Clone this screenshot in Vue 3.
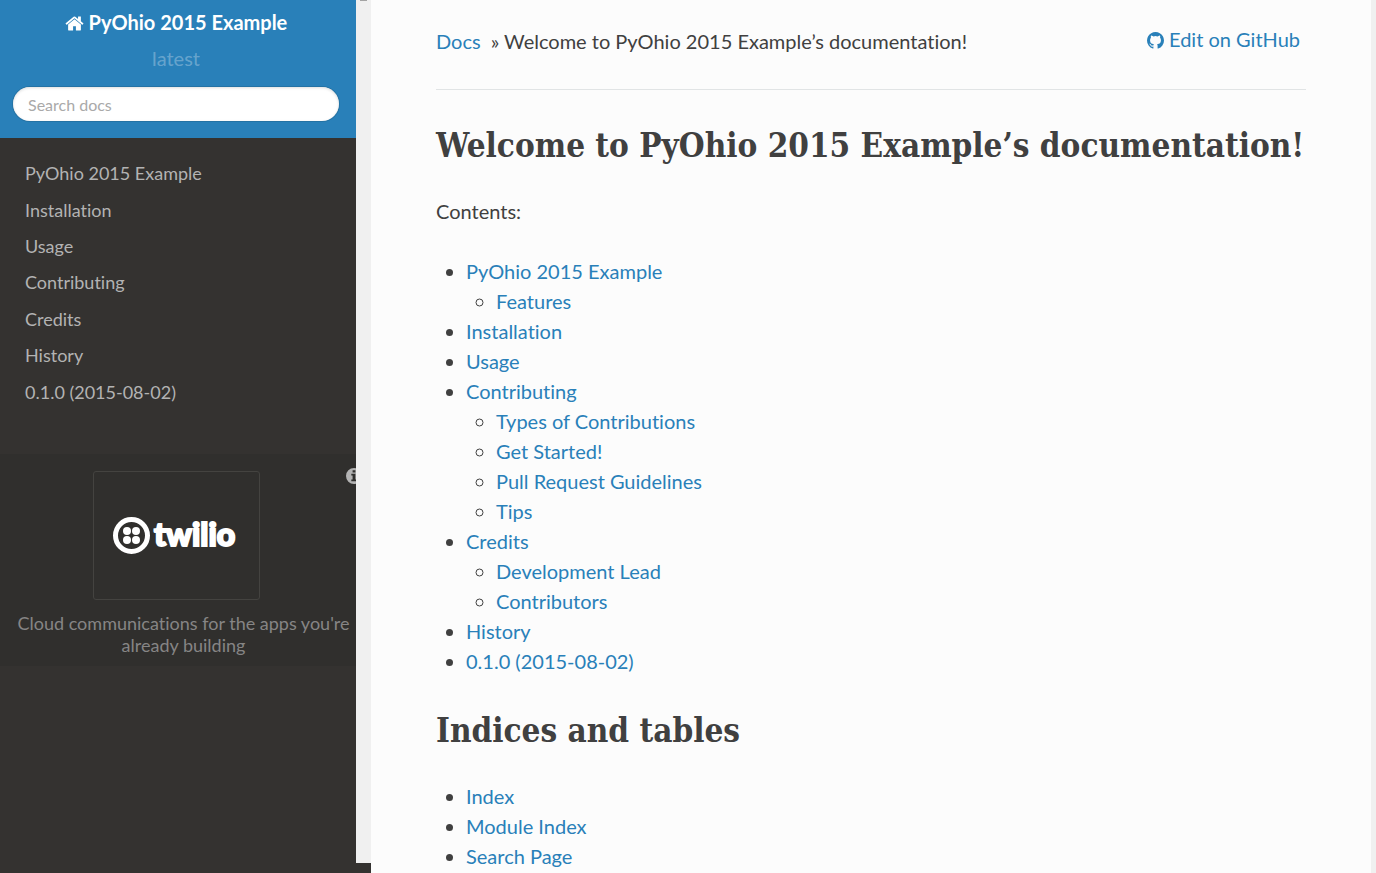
<script setup>
const menu = ['PyOhio 2015 Example', 'Installation', 'Usage', 'Contributing', 'Credits', 'History', '0.1.0 (2015-08-02)']
const contents = [
  { title: 'PyOhio 2015 Example', children: ['Features'] },
  { title: 'Installation' },
  { title: 'Usage' },
  { title: 'Contributing', children: ['Types of Contributions', 'Get Started!', 'Pull Request Guidelines', 'Tips'] },
  { title: 'Credits', children: ['Development Lead', 'Contributors'] },
  { title: 'History' },
  { title: '0.1.0 (2015-08-02)' },
]
const indices = ['Index', 'Module Index', 'Search Page']
</script>

<template>
  <div class="page">
    <aside class="side">
      <div class="side-scroll">
        <div class="side-body">
          <header class="side-head">
            <a class="home" href="#">
              <svg class="home-icon" viewBox="0 0 1664 1536" aria-hidden="true">
                <path d="M1408 864v480q0 26-19 45t-45 19H960v-384H704v384H320q-26 0-45-19t-19-45V864q0-1 .5-3t.5-3l575-474 575 474q1 2 1 6zm223-69l-62 74q-8 9-21 11h-3q-13 0-21-7L832 296 140 873q-12 8-24 7-13-2-21-11l-62-74q-8-10-7-23.500t11-21.500l719-599q32-26 76-26t76 26l244 204V160q0-14 9-23t23-9h192q14 0 23 9t9 23v408l219 182q10 8 11 21.500t-7 23.500z" />
              </svg>
              PyOhio 2015 Example</a>
            <div class="version">latest</div>
            <form role="search" @submit.prevent>
              <input class="search" type="text" placeholder="Search docs" aria-label="Search docs">
            </form>
          </header>
          <nav aria-label="Documentation">
            <ul class="menu">
              <li v-for="item in menu" :key="item"><a href="#">{{ item }}</a></li>
            </ul>
          </nav>
          <section class="promo">
            <a class="promo-info" href="#" aria-label="About this sponsor">
              <svg viewBox="0 0 16 16" aria-hidden="true">
                <path fill-rule="evenodd" d="M8 0a8 8 0 1 1 0 16A8 8 0 0 1 8 0zM6.600 2.300v2.200h2.800V2.300zM5.300 5.800v1.700h1.300v3.900H5.300v1.900h5.400v-1.900H9.400V5.800z" />
              </svg>
            </a>
            <a class="promo-card" href="#" aria-label="twilio">
              <svg viewBox="0 0 128 38" class="logo" aria-hidden="true">
                <circle cx="18.500" cy="18.500" r="16" fill="none" stroke="#fff" stroke-width="5" />
                <circle cx="14" cy="14" r="4" />
                <circle cx="23" cy="14" r="4" />
                <circle cx="14" cy="23" r="4" />
                <circle cx="23" cy="23" r="4" />
                <text x="41" y="29">twilio</text>
              </svg>
            </a>
            <p class="promo-text"><a href="#">Cloud communications for the apps you're already building</a></p>
          </section>
        </div>
        <div class="track"><span class="track-arrow"></span></div>
      </div>
    </aside>

    <main class="main">
      <div class="content">
        <div class="crumbs">
          <nav aria-label="Breadcrumb"><a class="docs" href="#">Docs</a>» Welcome to PyOhio 2015 Example’s documentation!</nav>
          <a class="edit" href="#">
            <svg class="github" viewBox="0 0 1536 1536" aria-hidden="true">
              <path d="M768 0q209 0 385.500 103T1433 382.500 1536 768q0 251-146.500 451.500T1011 1497q-27 5-40-7t-13-30q0-3 .5-76.500t.5-134.500q0-97-52-142 57-6 102.500-18t94-39 81-66.500 53-105T1258 728q0-119-79-206 37-91-8-204-28-9-81 11t-92 44l-38 24q-93-26-192-26t-192 26q-16-11-42.500-27T450 331.500 365 318q-45 113-8 204-79 87-79 206 0 85 20.500 150t52.500 105 80.500 67 94 39 102.500 18q-39 36-49 103-21 10-45 15t-57 5-65.500-21.500T356 1146q-19-32-48.500-52t-49.500-24l-20-3q-21 0-29 4.500t-5 11.500 9 14 13 12l7 5q22 10 43.500 38t31.500 51l10 23q13 38 44 61.500t67 30 69.500 7 55.500-3.500l23-4q0 38 .5 88.500t.5 54.500q0 18-13 30t-40 7q-232-77-378.500-277.500T0 768q0-209 103-385.500T382.500 103 768 0z" />
            </svg>
            Edit on GitHub</a>
        </div>
        <hr>
        <h1>Welcome to PyOhio 2015 Example’s documentation!</h1>
        <p class="lead">Contents:</p>
        <ul class="toc">
          <li v-for="entry in contents" :key="entry.title">
            <a href="#">{{ entry.title }}</a>
            <ul v-if="entry.children">
              <li v-for="child in entry.children" :key="child"><a href="#">{{ child }}</a></li>
            </ul>
          </li>
        </ul>
        <h1>Indices and tables</h1>
        <ul class="toc">
          <li v-for="entry in indices" :key="entry"><a href="#">{{ entry }}</a></li>
        </ul>
      </div>
    </main>
  </div>
</template>

<style>
body {
  margin: 0;
  background: #f0f0f0;
}
</style>

<style scoped>
.page {
  display: flex;
  height: 100vh;
  overflow: hidden;
  font: 20px/30px Lato, "Open Sans", sans-serif;
  font-variant-ligatures: none;
  color: #404040;
}
a {
  color: #2980b9;
  text-decoration: none;
}
ul {
  margin: 0;
  padding: 0;
}
.side {
  display: flex;
  flex: none;
  width: 371px;
  padding-bottom: 10px;
  box-sizing: border-box;
  background: #343230;
}
.side-scroll {
  display: flex;
  flex: 1;
  min-width: 0;
}
.side-body {
  flex: 1;
  min-width: 0;
  overflow: hidden;
}
.track {
  flex: none;
  display: flex;
  justify-content: center;
  width: 15px;
  background: #f0f0f0;
}
.track-arrow {
  width: 7px;
  height: 1px;
  background: #a3a3a3;
}
.side-head {
  padding: 7px 17px 17px 13px;
  background: #2980b9;
  text-align: center;
}
.home {
  display: block;
  margin-bottom: 6px;
  font-weight: 700;
  color: #fff;
}
.home-icon {
  width: 19px;
  height: 17px;
  fill: #fff;
  vertical-align: -2px;
}
.version {
  margin-bottom: 14px;
  color: rgba(255, 255, 255, 0.3);
}
.search {
  display: block;
  width: 100%;
  height: 34px;
  box-sizing: border-box;
  padding: 1px 15px 0;
  border: 0;
  border-radius: 17px;
  background: #fff;
  box-shadow: 0 0 0 1px #2472a4, inset 0 1px 3px #ddd;
  font: 16px Lato, sans-serif;
  color: #404040;
}
.search::placeholder {
  color: #a9a9a9;
  opacity: 1;
}
.menu {
  display: grid;
  grid-auto-rows: 1fr;
  min-height: 255px;
  padding: 17px 25px 44px;
  list-style: none;
  font-size: 18px;
}
.menu li {
  display: flex;
  align-items: center;
}
.menu a {
  color: #b3b3b3;
}
.promo {
  position: relative;
  padding: 17px 0 10px;
  background: #302f2d;
}
.promo-info {
  position: absolute;
  top: 14px;
  right: -6px;
  width: 16px;
  height: 16px;
}
.promo-info svg {
  display: block;
  fill: #b3b3b3;
}
.promo-card {
  display: flex;
  align-items: center;
  justify-content: center;
  width: 167px;
  height: 129px;
  box-sizing: border-box;
  margin: 0 96px 12px 93px;
  border: 1px solid #444340;
  border-radius: 3px;
}
.logo {
  width: 128px;
  height: 38px;
  overflow: visible;
  fill: #fff;
}
.logo text {
  font: 900 32px Lato, sans-serif;
  stroke: #fff;
  stroke-width: 2px;
}
.promo-text {
  margin: 0;
  padding: 0 4px 0 15px;
  font-size: 18px;
  line-height: 22px;
  text-align: center;
}
.promo-text a {
  color: #868585;
}
.main {
  flex: 1;
  min-width: 0;
}
.content {
  max-width: 1000px;
  min-height: 100%;
  box-sizing: border-box;
  padding: 24px 65px;
  background: #fcfcfc;
}
.crumbs {
  display: flex;
  justify-content: space-between;
  align-items: flex-start;
}
.crumbs nav {
  padding-top: 2px;
}
.docs {
  margin-right: 10px;
}
.edit {
  margin-right: 6px;
}
.github {
  width: 17px;
  height: 17px;
  fill: #2980b9;
  vertical-align: -2px;
}
hr {
  height: 1px;
  margin: 33px 0 31px;
  border: 0;
  background: #e1e4e5;
}
h1 {
  margin: 0 0 25px;
  font: 700 33px/50px "Roboto Slab", "DejaVu Serif Condensed", "DejaVu Serif", serif;
  white-space: nowrap;
}
.lead {
  margin: 0 0 30px;
}
.toc {
  margin-bottom: 30px;
  padding-left: 30px;
  list-style: disc;
}
.toc ul {
  padding-left: 30px;
  list-style: circle;
}
</style>
